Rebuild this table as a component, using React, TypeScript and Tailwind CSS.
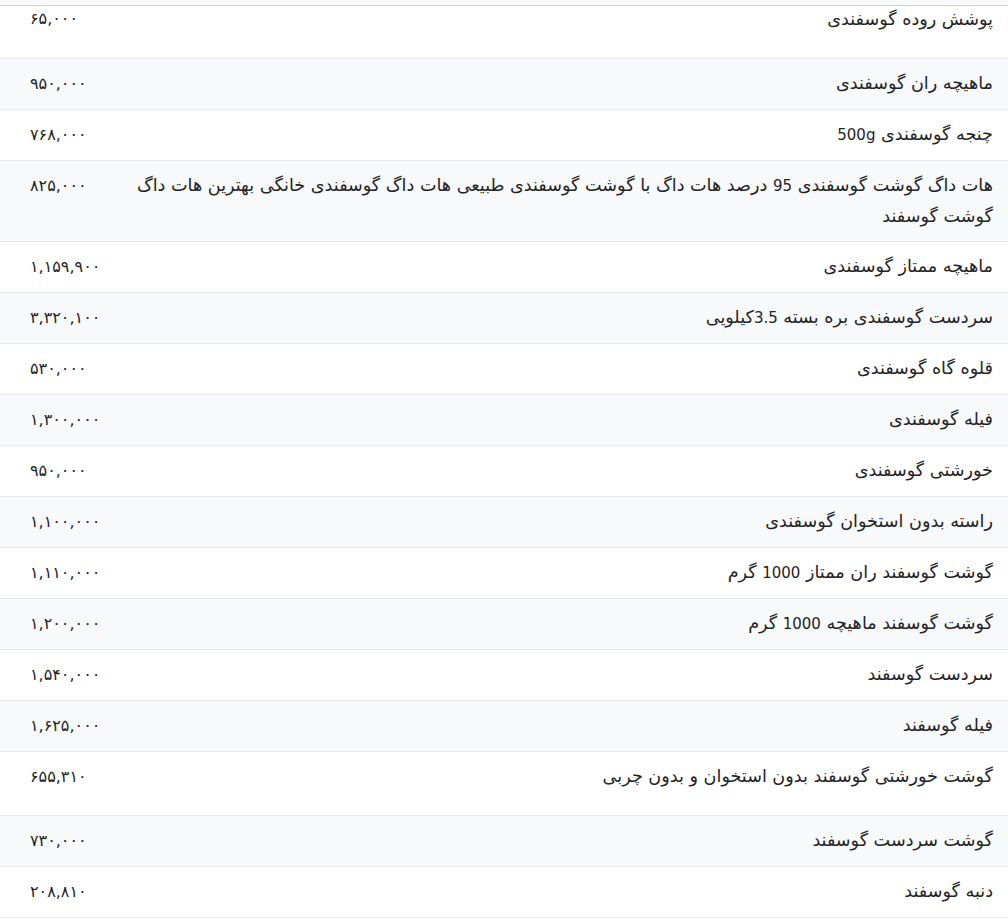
import React from "react";

type Row = { name: string; price: string; h?: string };

const rows: Row[] = [
  { name: "ماهیچه ران گوسفندی", price: "۹۵۰,۰۰۰" },
  { name: "چنجه گوسفندی 500g", price: "۷۶۸,۰۰۰" },
  {
    name: "هات داگ گوشت گوسفندی 95 درصد هات داگ با گوشت گوسفندی طبیعی هات داگ گوسفندی خانگی بهترین هات داگ گوشت گوسفند",
    price: "۸۲۵,۰۰۰",
    h: "h-[81px]",
  },
  { name: "ماهیچه ممتاز گوسفندی", price: "۱,۱۵۹,۹۰۰" },
  { name: "سردست گوسفندی بره بسته 3.5کیلویی", price: "۳,۳۲۰,۱۰۰" },
  { name: "قلوه گاه گوسفندی", price: "۵۳۰,۰۰۰" },
  { name: "فیله گوسفندی", price: "۱,۳۰۰,۰۰۰" },
  { name: "خورشتی گوسفندی", price: "۹۵۰,۰۰۰" },
  { name: "راسته بدون استخوان گوسفندی", price: "۱,۱۰۰,۰۰۰" },
  { name: "گوشت گوسفند ران ممتاز 1000 گرم", price: "۱,۱۱۰,۰۰۰" },
  { name: "گوشت گوسفند ماهیچه 1000 گرم", price: "۱,۲۰۰,۰۰۰" },
  { name: "سردست گوسفند", price: "۱,۵۴۰,۰۰۰" },
  { name: "فیله گوسفند", price: "۱,۶۲۵,۰۰۰" },
  { name: "گوشت خورشتی گوسفند بدون استخوان و بدون چربی", price: "۶۵۵,۳۱۰", h: "h-[64px]" },
  { name: "گوشت سردست گوسفند", price: "۷۳۰,۰۰۰" },
  { name: "دنبه گوسفند", price: "۲۰۸,۸۱۰" },
];

function Name({ text }: { text: string }) {
  const parts = text.split(/([A-Za-z0-9.]+)/);
  return (
    <>
      {parts.map((p, i) =>
        /^[A-Za-z0-9.]+$/.test(p) ? (
          <span key={i} className="text-[15px]">
            {p}
          </span>
        ) : (
          <React.Fragment key={i}>{p}</React.Fragment>
        )
      )}
    </>
  );
}

export default function App() {
  return (
    <div
      dir="rtl"
      className="w-[1008px] bg-white text-[#1f2326]"
      style={{ fontFamily: '"DejaVu Sans", sans-serif' }}
    >
      <div className="h-[6px] bg-[#f8f9fa] border-b border-[#cfd2d6]" />
      <div className="flex h-[53px] overflow-hidden border-b border-[#e5e7ea] bg-white">
        <div className="flex-1 pr-[15px] pl-[10px] leading-[26px] text-[17.6px]">
          <Name text="پوشش روده گوسفندی" />
        </div>
        <div dir="ltr" className="w-[100px] shrink-0 pl-[30px] text-left leading-[26px] text-[16px]">
          ۶۵,۰۰۰
        </div>
      </div>
      {rows.map((r, i) => (
        <div
          key={i}
          className={`flex overflow-hidden border-b border-[#e5e7ea] ${r.h ?? "h-[51px]"} ${
            i % 2 === 0 ? "bg-[#f8f9fa]" : "bg-white"
          }`}
        >
          <div className="flex-1 pr-[15px] pl-[10px] pt-[10px] leading-[29.5px] text-[17.6px]">
            <Name text={r.name} />
          </div>
          <div dir="ltr" className="w-[100px] shrink-0 pl-[30px] text-left pt-[10px] leading-[30px] text-[16px]">
            {r.price}
          </div>
        </div>
      ))}
    </div>
  );
}
